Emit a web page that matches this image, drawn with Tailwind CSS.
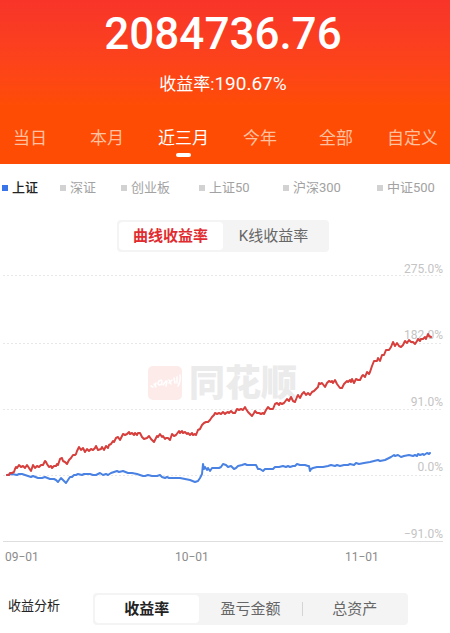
<!DOCTYPE html>
<html lang="zh-CN">
<head>
  <meta charset="UTF-8" />
  <meta name="viewport" content="width=device-width, initial-scale=1" />
  <title>收益分析</title>

  <!-- TailwindCSS -->
  <script src="https://cdn.jsdelivr.net/npm/@tailwindcss/browser@4"></script>
</head>
<body class="bg-white font-[Roboto,'Noto_Sans_CJK_SC',sans-serif] min-h-screen">

  <!-- Profit header -->
  <header class="h-41 flex flex-col text-white bg-linear-to-b from-[#f83429] to-[#ff4c04] to-65%">
    <h1 class="pt-2 pr-1 text-center text-[44px] leading-[52px] font-medium">2084736.76</h1>
    <p class="mt-3 text-center text-[17px] leading-6 pr-1">收益率:<span class="text-[19px] leading-6">190.67%</span></p>

    <!-- Period tabs -->
    <nav class="mt-auto pl-[13px] pb-[7px] grid grid-cols-[77fr_68fr_85fr_76fr_68fr_63fr] text-[17px] leading-6 text-[#ffc1a0]">
      <button class="justify-self-start flex flex-col items-center">当日</button>
      <button class="justify-self-start flex flex-col items-center">本月</button>
      <button class="justify-self-start flex flex-col items-center gap-[3px] whitespace-nowrap text-white">
        近三月
        <span class="w-[15px] h-1 rounded-sm bg-white"></span>
      </button>
      <button class="justify-self-start flex flex-col items-center">今年</button>
      <button class="justify-self-start flex flex-col items-center">全部</button>
      <button class="justify-self-start flex flex-col items-center whitespace-nowrap">自定义</button>
    </nav>
  </header>

  <main>
    <!-- Index legend -->
    <div class="mt-3.5 pl-0.5 grid grid-cols-[58fr_61fr_78fr_84fr_94fr_73fr] text-[13px] leading-5 text-[#a2a2a2] whitespace-nowrap">
      <button class="flex items-center gap-1 font-medium text-[#222]"><span class="size-1.5 bg-[#3974e8]"></span>上证</button>
      <button class="flex items-center gap-1"><span class="size-1.5 bg-[#d2d2d2]"></span>深证</button>
      <button class="flex items-center gap-1"><span class="size-1.5 bg-[#d2d2d2]"></span>创业板</button>
      <button class="flex items-center gap-1"><span class="size-1.5 bg-[#d2d2d2]"></span>上证50</button>
      <button class="flex items-center gap-1"><span class="size-1.5 bg-[#d2d2d2]"></span>沪深300</button>
      <button class="flex items-center gap-1"><span class="size-1.5 bg-[#d2d2d2]"></span>中证500</button>
    </div>

    <!-- Chart type switch -->
    <div class="mt-[22px] flex justify-center">
      <div class="mr-[5px] flex rounded bg-[#f4f4f4] p-0.5 text-[15px] leading-7">
        <button class="w-26 rounded bg-white font-bold text-[#e02c30]">曲线收益率</button>
        <button class="w-26 pr-0.5 text-[#666]">K线收益率</button>
      </div>
    </div>

    <!-- Chart -->
    <svg class="block w-full" viewBox="0 252 450 318" font-size="12" role="img" aria-label="收益率曲线">
      <!-- watermark -->
      <rect x="148" y="366" width="34" height="34" rx="5" fill="#fdebea" />
      <g fill="none" stroke="#fff" stroke-width="1.5" stroke-linecap="round">
        <path d="M151 386l2 1M154 384l2 3m0-4l-1 3M159 381q3-2 3 1t-3 3q-2-1 0-4M163 385l3-4m0 5l1-5M169 380l2 4m-2-1l3-3M174 378l1 5m2-6v6M180 375q1 6-2 11" />
      </g>
      <text x="189" y="396" font-size="36" font-weight="900" fill="#ebebeb">同花顺</text>

      <!-- grid -->
      <g stroke="#e8e8e8" stroke-dasharray="2 2">
        <path d="M3 275.500H443M3 343.500H443M3 409.500H443M3 475.500H443" />
      </g>
      <path d="M3 541.500H443" stroke="#dedede" />

      <g fill="#c4c4c4" text-anchor="end">
        <text x="443" y="273">275.0%</text>
        <text x="443" y="339">182.0%</text>
        <text x="443" y="406">91.0%</text>
        <text x="443" y="471">0.0%</text>
        <text x="443" y="538">−91.0%</text>
      </g>

      <!-- index line -->
      <polyline fill="none" stroke="#4a82e4" stroke-width="2" stroke-linejoin="round" stroke-linecap="round"
        points="7,475 12,474 17,475 19,474 22,474 25,475 28,476 31,477 33,476 38,478 42,478 45,477 50,479 54,479 56,480 58,482 61,478 63,480 66,483 68,480 70,477 72,477 74,475 76,475 78,474 82,475 84,474 87,474 90,474 93,475 96,475 98,474 100,473 103,475 106,474 108,475 111,473 114,472 117,471 119,472 123,471 128,473 132,473 137,474 140,475 143,476 145,476 148,475 152,476 157,476 160,475 162,477 165,478 167,477 169,478 175,478 180,478 185,479 190,480 195,482 198,481 200,478 202,474 203,464 204,469 205,467 207,470 208,468 210,471 212,468 215,468 219,468 221,467 223,464 226,465 228,467 231,466 234,469 236,468 238,466 242,465 245,464 247,465 251,465 256,465 258,469 260,469 263,471 265,469 269,469 273,469 275,467 279,467 283,466 286,467 288,466 290,467 293,466 295,466 297,464 300,465 305,465 308,466 309,466 310,471 311,469 313,468 317,467 323,467 328,466 331,465 335,466 337,465 340,466 344,465 348,465 350,464 354,465 356,463 359,464 364,463 370,462 374,461 378,460 380,461 385,460 389,458 391,457 394,455 395,456 398,455 401,457 404,456 409,455 413,456 415,455 417,456 418,454 420,455 423,454 424,455 427,453 429,454 430,453" />

      <!-- own return line -->
      <polyline fill="none" stroke="#d63f3c" stroke-width="2" stroke-linejoin="round" stroke-linecap="round"
        points="7,475 9,475 10,473 12,473 14,472 15,469 16,467 17,468 19,465 21,467 23,466 25,468 27,465 29,468 31,471 33,465 35,468 37,466 39,467 41,465 43,465 45,461 46,462 47,464 49,467 51,466 52,468 54,466 56,466 57,464 58,465 60,459 62,458 63,461 65,462 67,464 69,460 71,458 73,455 75,455 76,454 77,451 79,447 81,450 83,448 85,452 87,449 89,451 91,449 93,450 95,448 96,446 98,450 101,449 102,447 104,450 106,446 108,448 109,445 111,444 113,441 114,442 116,438 118,437 120,440 122,436 123,434 125,435 127,434 129,432 130,434 132,433 134,435 135,433 137,435 138,433 140,433 142,437 144,439 147,438 149,436 151,439 154,442 156,438 157,436 158,437 160,434 162,437 163,436 165,439 166,438 168,438 170,440 172,434 174,436 176,435 179,431 180,433 182,431 183,433 185,432 187,434 188,433 190,435 192,433 193,435 195,434 196,435 198,430 200,429 202,425 204,423 206,422 208,422 210,420 212,417 214,415 215,413 217,414 219,413 221,414 223,412 225,414 226,413 228,412 229,413 231,411 233,413 235,413 237,409 239,410 241,409 243,410 245,407 246,409 248,412 250,414 252,416 254,413 255,411 257,413 259,413 261,414 263,413 264,414 266,410 268,407 270,409 273,409 275,404 277,403 279,405 280,403 282,404 284,403 287,399 289,401 291,397 293,401 295,402 297,397 298,395 300,398 302,394 304,392 306,395 308,393 310,395 312,392 314,391 316,389 318,387 319,383 320,384 322,383 325,387 327,383 329,381 331,382 332,381 333,383 335,380 337,384 340,388 342,388 344,384 345,383 347,381 348,382 350,380 351,382 352,379 354,383 356,379 358,380 360,380 362,376 363,375 365,377 367,372 369,374 370,372 372,366 374,361 375,361 377,361 378,358 380,361 382,355 384,355 386,350 387,350 389,350 391,347 393,342 395,346 397,343 399,346 401,347 403,345 405,341 407,343 409,340 411,342 413,342 415,344 417,341 418,339 420,341 421,339 423,339 425,337 426,339 428,334 429,336 431,337" />

      <g fill="#8b8b8b">
        <text x="5" y="561">09−01</text>
        <text x="175" y="561">10−01</text>
        <text x="345" y="561">11−01</text>
      </g>
    </svg>

    <!-- Analysis switch -->
    <section class="mt-[23px] flex items-center pl-2">
      <h2 class="w-[85px] pb-1.5 text-[13px] leading-5 text-[#222]">收益分析</h2>
      <div class="mr-[42px] flex-1 grid grid-cols-3 rounded bg-[#f4f4f4] p-0.5 text-[15px] leading-7 text-[#666]">
        <button class="rounded bg-white font-bold text-[#222]">收益率</button>
        <button>盈亏金额</button>
        <button class="flex items-center"><span class="w-px h-3.5 bg-[#d4d4d4]"></span><span class="flex-1">总资产</span></button>
      </div>
    </section>
  </main>

</body>
</html>
